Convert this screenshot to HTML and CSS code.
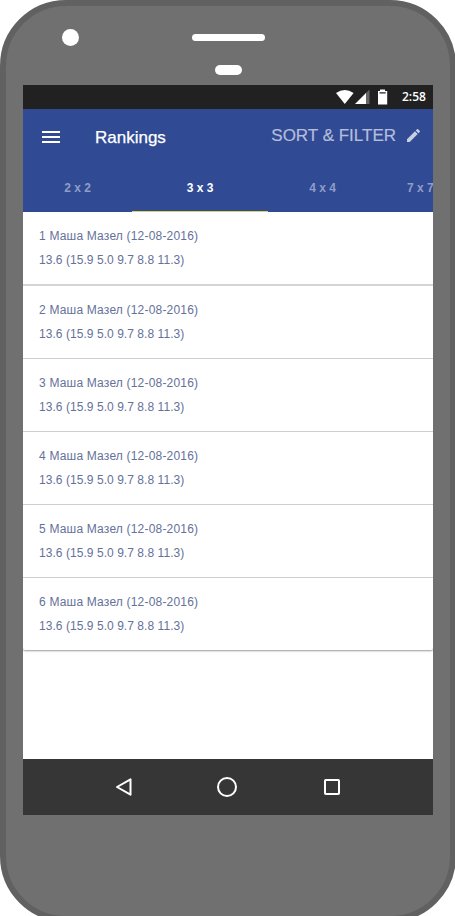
FILE: index.html
```html
<!DOCTYPE html>
<html lang="en">
<head>
<meta charset="utf-8">
<title>Rankings</title>
<link rel="stylesheet" href="styles.css">
</head>
<body>
<div class="phone">
  <div class="camera"></div>
  <div class="speaker"></div>
  <div class="sensor"></div>
  <main class="screen">
    <div class="status">
      <svg class="signals" width="52" height="16" viewBox="0 0 52 16" fill="#fff">
        <path d="M0 4Q8.800-2.200 17.600 4L8.800 15z"/>
        <path d="M29 5L33.500 .5V15H29z" fill="#666"/><path d="M19 15L30 4V15z"/>
        <path fill-rule="evenodd" d="M42 2h2V.5h5V2h2.200v13.500H42zM43.500 3.300v1.200h6.200V3.300z"/>
      </svg>
      <span class="clock">2:58</span>
    </div>
    <header class="bar">
      <svg class="menu" width="18" height="12" viewBox="0 0 18 12" fill="#fff"><path d="M0 0h18v2H0zM0 5h18v2H0zM0 10h18v2H0z"/></svg>
      <h1 class="title">Rankings</h1>
      <span class="sort">SORT &amp; FILTER</span>
      <svg class="pencil" width="13" height="13" viewBox="3 3 18 18"><path d="M3 17.250V21h3.750L17.810 9.940l-3.750-3.750L3 17.250zM20.710 7.040a1 1 0 0 0 0-1.410l-2.340-2.340a1 1 0 0 0-1.410 0l-1.830 1.830 3.750 3.750 1.830-1.830z"/></svg>
    </header>
    <nav class="tabs">
      <span class="tab">2 x 2</span>
      <span class="tab active">3 x 3</span>
      <span class="tab">4 x 4</span>
      <span class="tab last">7 x 7</span>
    </nav>
    <section class="list">
      <article class="item"><p class="name">1 Маша Мазел (12-08-2016)</p><p class="times">13.6 (15.9 5.0 9.7 8.8 11.3)</p></article>
      <article class="item"><p class="name">2 Маша Мазел (12-08-2016)</p><p class="times">13.6 (15.9 5.0 9.7 8.8 11.3)</p></article>
      <article class="item"><p class="name">3 Маша Мазел (12-08-2016)</p><p class="times">13.6 (15.9 5.0 9.7 8.8 11.3)</p></article>
      <article class="item"><p class="name">4 Маша Мазел (12-08-2016)</p><p class="times">13.6 (15.9 5.0 9.7 8.8 11.3)</p></article>
      <article class="item"><p class="name">5 Маша Мазел (12-08-2016)</p><p class="times">13.6 (15.9 5.0 9.7 8.8 11.3)</p></article>
      <article class="item"><p class="name">6 Маша Мазел (12-08-2016)</p><p class="times">13.6 (15.9 5.0 9.7 8.8 11.3)</p></article>
    </section>
    <footer class="keys">
      <svg width="18" height="20" viewBox="0 0 18 20"><path d="M2 10L15.500 2.300V17.700z"/></svg>
      <svg class="home" width="20" height="20" viewBox="0 0 20 20"><circle cx="10" cy="10" r="9"/></svg>
      <svg width="16" height="16" viewBox="0 0 16 16"><rect x="1" y="1" width="14" height="14" rx=".8"/></svg>
    </footer>
  </main>
</div>
</body>
</html>
```
FILE: styles.css
```css
* { box-sizing: border-box; }
body {
  margin: 0;
  height: 916px;
  overflow: hidden;
  background: #fff;
  font-family: "Liberation Sans", Arial, sans-serif;
}
h1, p { margin: 0; }
.phone {
  position: relative;
  width: 456px;
  height: 922px;
  padding: 79px 17px 0;
  border: 6px solid #616161;
  border-radius: 66px;
  background: #707070;
}
.camera, .speaker, .sensor { position: absolute; background: #fff; }
.camera { left: 56px; top: 23px; width: 17px; height: 17px; border-radius: 50%; }
.speaker { left: 186px; top: 28px; width: 73px; height: 7px; border-radius: 4px; }
.sensor { left: 209px; top: 59px; width: 27px; height: 10px; border-radius: 5px; }
.screen {
  display: flex;
  flex-direction: column;
  width: 410px;
  height: 730px;
  overflow: hidden;
  background: #fff;
}
.status {
  display: flex;
  justify-content: flex-end;
  flex: none;
  height: 24px;
  padding: 4px 7px 0 0;
  background: #212121;
}
.clock {
  width: 24px;
  margin-left: 14px;
  color: #fff;
  font: 600 12px/16px "Open Sans", sans-serif;
  white-space: nowrap;
}
.bar {
  display: flex;
  align-items: center;
  flex: none;
  height: 56px;
  padding: 0 12px 0 19px;
  background: #304a94;
}
.title {
  margin: 2px 0 0 35px;
  color: #fff;
  font-size: 17px;
  font-weight: 400;
  line-height: 20px;
  -webkit-text-stroke: .25px #fff;
}
.sort {
  margin: -2px 12px 0 auto;
  color: #b4bedb;
  font-size: 17px;
  line-height: 20px;
  -webkit-text-stroke: .2px #b4bedb;
}
.pencil { margin: -3px 1px 0 -1px; fill: #c9cfe3; }
.tabs {
  display: flex;
  flex: none;
  height: 47px;
  background: #304a94;
}
.tab {
  flex: none;
  width: 109px;
  color: #8f9dc8;
  font-size: 12px;
  font-weight: 700;
  line-height: 46px;
  text-align: center;
}
.active { width: 136px; color: #fff; border-bottom: 1px solid #e4d85c; }
.last { width: 85px; padding-left: 30px; text-align: left; }
.list {
  flex: none;
  height: 438px;
  border-radius: 2px;
  box-shadow: 0 1px 2px rgba(0, 0, 0, .4);
}
.item {
  height: 73px;
  padding: 12px 16px 0;
  border-bottom: 1px solid #cfcfcf;
  color: #65719a;
  font-size: 12px;
  line-height: 24px;
}
.name { letter-spacing: .19px; }
.times { letter-spacing: .05px; }
.item:first-child { height: 74px; border-bottom: 2px solid #d4d4d4; }
.item:last-child { border-bottom: 0; }
.keys {
  display: flex;
  align-items: center;
  justify-content: space-between;
  flex: none;
  height: 56px;
  margin-top: auto;
  padding: 0 93px 0 92px;
  background: #363636;
}
.keys svg { fill: none; stroke: #fff; stroke-width: 2; stroke-linejoin: round; }
.keys .home { margin: 0 2px 0 -2px; }
```
